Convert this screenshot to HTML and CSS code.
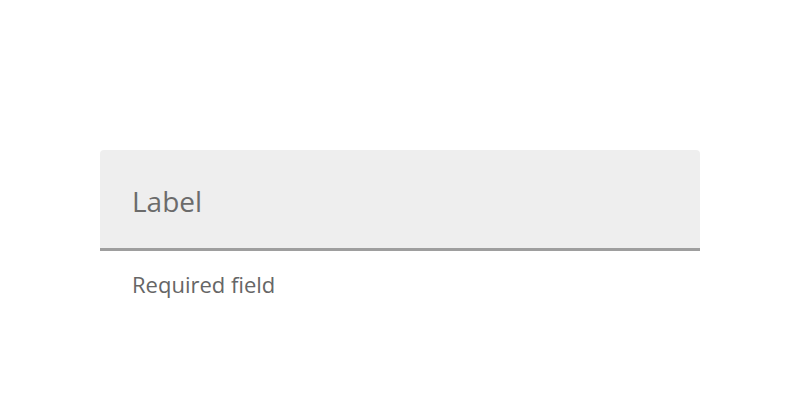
FILE: index.html
```html
<!DOCTYPE html>
<html>
<head>
<meta charset="utf-8">
<link rel="stylesheet" href="styles.css">
</head>
<body>
<div class="page">
  <div class="field">
    <div class="input">
      <span class="label">Label</span>
    </div>
    <div class="helper">Required field</div>
  </div>
</div>
</body>
</html>
```
FILE: styles.css
```css
html, body {
  margin: 0;
  padding: 0;
  background: #ffffff;
}
body {
  font-family: "Open Sans", "Noto Sans", sans-serif;
}
.page {
  width: 800px;
  height: 400px;
  padding: 150px 100px 0;
  box-sizing: border-box;
}
.field {
  display: flex;
  flex-direction: column;
}
.input {
  background: #eeeeee;
  border-bottom: 3px solid #9e9e9e;
  border-radius: 4px 4px 0 0;
  display: flex;
  align-items: center;
  padding: 4px 32px 0;
  box-sizing: content-box;
  height: 94px;
}
.label {
  font-size: 28px;
  color: #6b6b6b;
}
.helper {
  padding: 0 32px;
  margin-top: 18px;
  font-size: 22px;
  color: #666666;
}
```
